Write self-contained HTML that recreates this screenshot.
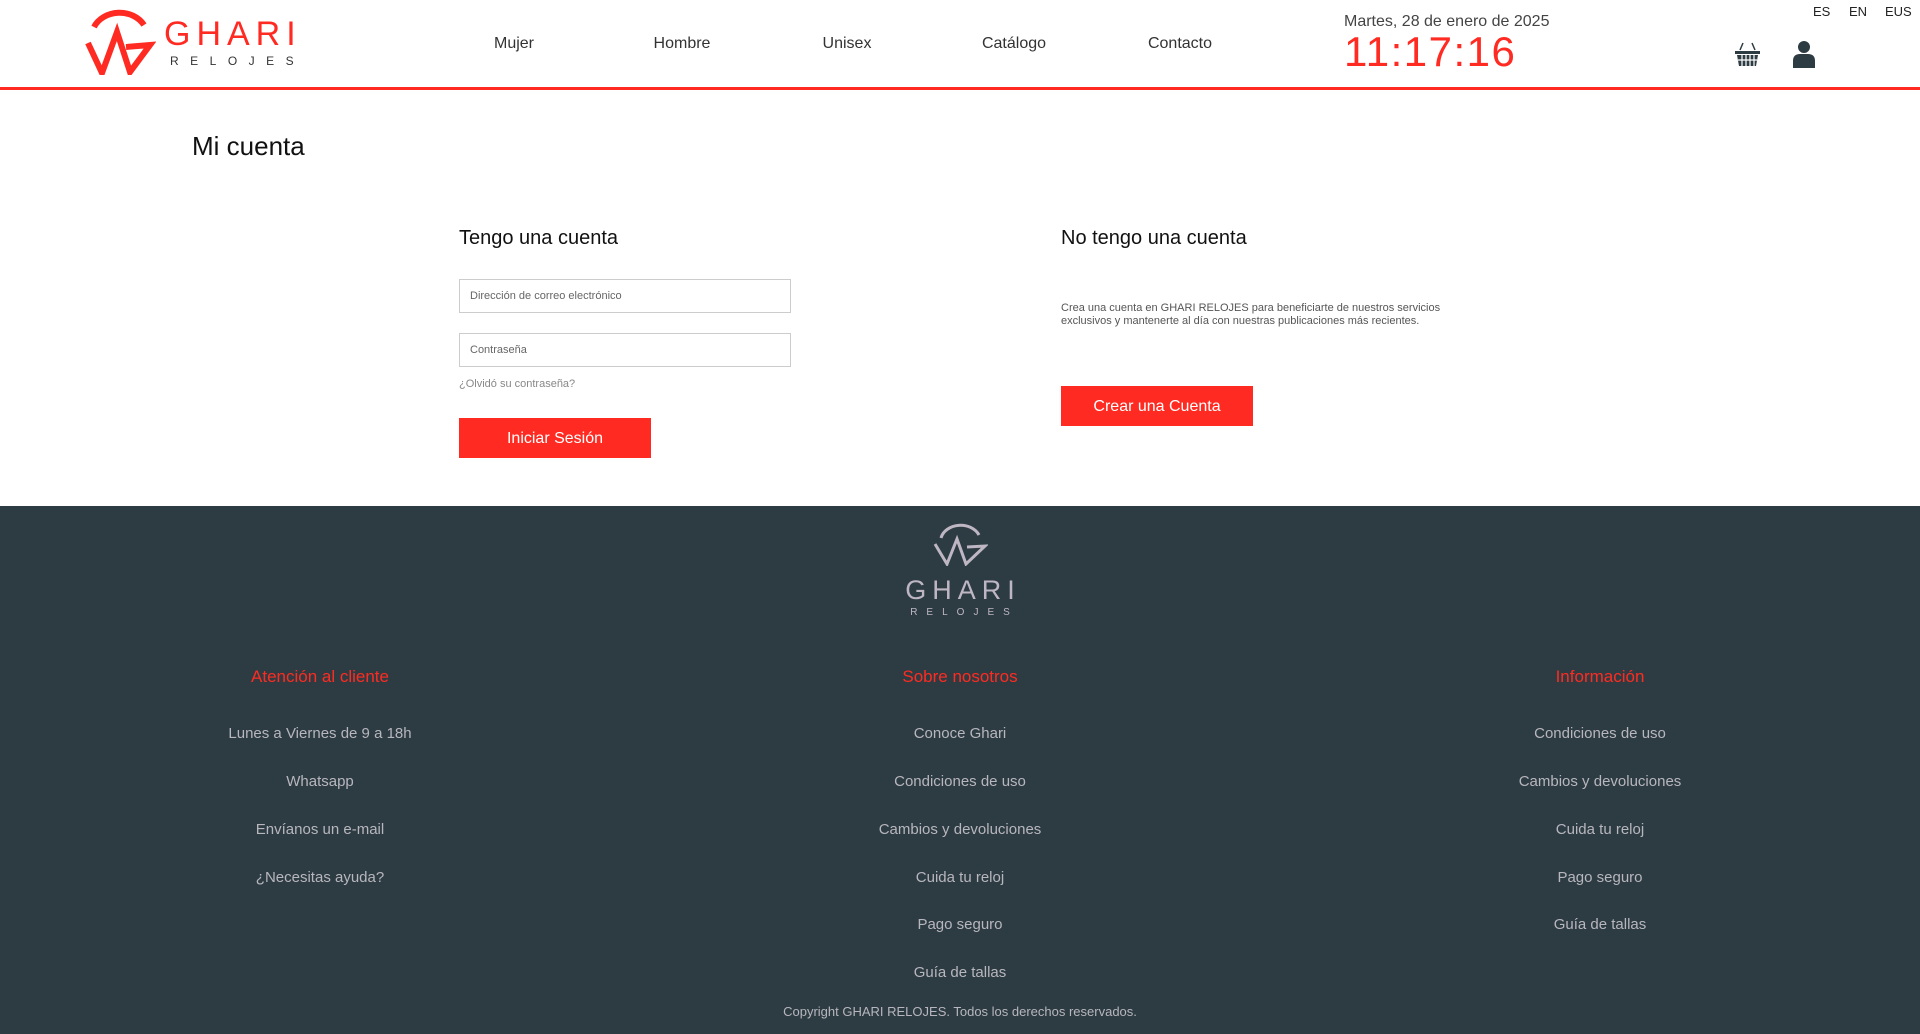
<!DOCTYPE html>
<html><head><meta charset="utf-8"><style>
*{margin:0;padding:0;box-sizing:border-box}
body{width:1920px;height:1034px;position:relative;background:#fff;font-family:"Liberation Sans",sans-serif;overflow:hidden;color:#222}
.a{position:absolute;white-space:nowrap}
.nav{top:35px;font-size:16px;color:#333;transform:translateX(-50%)}
.in{position:absolute;left:459px;width:332px;height:34px;border:1.5px solid #ccc;font-size:11px;color:#666;padding:10px 0 0 10px}
.btn{position:absolute;background:#ff2b22;color:#fff;font-size:16px;text-align:center}
footer{position:absolute;left:0;top:506px;width:1920px;height:528px;background:#2d3c42}
.h{font-size:17px;color:#ff2b22;transform:translateX(-50%);top:161px}
.l{font-size:15px;color:#b8b6be;transform:translateX(-50%)}
</style></head><body>
<svg class="a" style="left:82px;top:9px" width="74" height="66" viewBox="0 0 74 66">
<path d="M12 18 A28 24 0 0 1 62 16" fill="none" stroke="#ff2b22" stroke-width="6"/>
<path d="M6 34 L20 64 L35 23 L48 63 L68 36 L44 38" fill="none" stroke="#ff2b22" stroke-width="6" stroke-linejoin="miter"/>
</svg>
<div class="a" style="left:164px;top:15px;font-size:34px;letter-spacing:6px;color:#ff2b22">GHARI</div>
<div class="a" style="left:170px;top:54px;font-size:12px;letter-spacing:11.5px;color:#333">RELOJES</div>
<div class="nav a" style="left:514px">Mujer</div>
<div class="nav a" style="left:682px">Hombre</div>
<div class="nav a" style="left:847px">Unisex</div>
<div class="nav a" style="left:1014px">Catálogo</div>
<div class="nav a" style="left:1180px">Contacto</div>
<div class="a" style="left:1344px;top:13px;font-size:16px;color:#444">Martes, 28 de enero de 2025</div>
<div class="a" style="left:1344px;top:28px;font-size:42px;letter-spacing:1.5px;color:#ff2b22">11:17:16</div>
<div class="a" style="left:1813px;top:4px;font-size:13px;color:#222">ES</div>
<div class="a" style="left:1849px;top:4px;font-size:13px;color:#222">EN</div>
<div class="a" style="left:1885px;top:4px;font-size:13px;color:#222">EUS</div>
<svg class="a" style="left:1735px;top:41px" width="26" height="26" viewBox="0 0 26 26">
<path d="M8 2 L5 9 M17 2 L20 9" stroke="#2d3c42" stroke-width="1.5"/>
<rect x="0" y="10" width="25" height="3" fill="#2d3c42"/>
<path d="M2 14 H23 L21 25 H4 Z" fill="#2d3c42"/>
<path d="M7 14 V25 M11 14 V25 M15 14 V25 M19 14 V25 M3 19 H22" stroke="#fff" stroke-width="1.2"/>
</svg>
<svg class="a" style="left:1793px;top:41px" width="22" height="27" viewBox="0 0 22 27">
<circle cx="11" cy="6" r="6" fill="#2d3c42"/>
<path d="M0 27 V20 Q0 13 7 13 H15 Q22 13 22 20 V27 Z" fill="#2d3c42"/>
</svg>
<div class="a" style="left:0;top:87px;width:1920px;height:3px;background:#ff2b22"></div>
<div class="a" style="left:192px;top:131px;font-size:26px;color:#111">Mi cuenta</div>
<div class="a" style="left:459px;top:227px;font-size:20px;color:#111">Tengo una cuenta</div>
<div class="in" style="top:279px">Dirección de correo electrónico</div>
<div class="in" style="top:333px">Contraseña</div>
<div class="a" style="left:459px;top:378px;font-size:11px;color:#888">¿Olvidó su contraseña?</div>
<div class="btn" style="left:459px;top:418px;width:192px;height:40px;line-height:42px">Iniciar Sesión</div>
<div class="a" style="left:1061px;top:227px;font-size:20px;color:#111">No tengo una cuenta</div>
<div class="a" style="left:1061px;top:302px;font-size:11px;line-height:13px;color:#555">Crea una cuenta en GHARI RELOJES para beneficiarte de nuestros servicios<br>exclusivos y mantenerte al día con nuestras publicaciones más recientes.</div>
<div class="btn" style="left:1061px;top:386px;width:192px;height:40px;line-height:42px">Crear una Cuenta</div>
<footer>
<svg class="a" style="left:932px;top:16px" width="56" height="44" viewBox="0 0 56 44">
<path d="M9 16 A20 16 0 0 1 47 13" fill="none" stroke="#bfb6c4" stroke-width="3"/>
<path d="M3 22 L15 42 L25 17 L34 42 L53 24 L35 25" fill="none" stroke="#bfb6c4" stroke-width="3"/>
</svg>
<div class="a" style="left:960px;top:69px;transform:translateX(-50%);font-size:27px;letter-spacing:6px;color:#bfb6c4;padding-left:6px">GHARI</div>
<div class="a" style="left:960px;top:101px;transform:translateX(-50%);font-size:10px;letter-spacing:9px;color:#bfb6c4;padding-left:9px">RELOJES</div>
<div class="a h" style="left:320px">Atención al cliente</div>
<div class="a h" style="left:960px">Sobre nosotros</div>
<div class="a h" style="left:1600px">Información</div>
<div class="a l" style="left:320px;top:219px">Lunes a Viernes de 9 a 18h</div>
<div class="a l" style="left:320px;top:267px">Whatsapp</div>
<div class="a l" style="left:320px;top:315px">Envíanos un e-mail</div>
<div class="a l" style="left:320px;top:363px">¿Necesitas ayuda?</div>
<div class="a l" style="left:960px;top:219px">Conoce Ghari</div>
<div class="a l" style="left:960px;top:267px">Condiciones de uso</div>
<div class="a l" style="left:960px;top:315px">Cambios y devoluciones</div>
<div class="a l" style="left:960px;top:363px">Cuida tu reloj</div>
<div class="a l" style="left:960px;top:410px">Pago seguro</div>
<div class="a l" style="left:960px;top:458px">Guía de tallas</div>
<div class="a l" style="left:1600px;top:219px">Condiciones de uso</div>
<div class="a l" style="left:1600px;top:267px">Cambios y devoluciones</div>
<div class="a l" style="left:1600px;top:315px">Cuida tu reloj</div>
<div class="a l" style="left:1600px;top:363px">Pago seguro</div>
<div class="a l" style="left:1600px;top:410px">Guía de tallas</div>
<div class="a l" style="left:960px;top:498px;font-size:13px">Copyright GHARI RELOJES. Todos los derechos reservados.</div>
</footer>
</body></html>
